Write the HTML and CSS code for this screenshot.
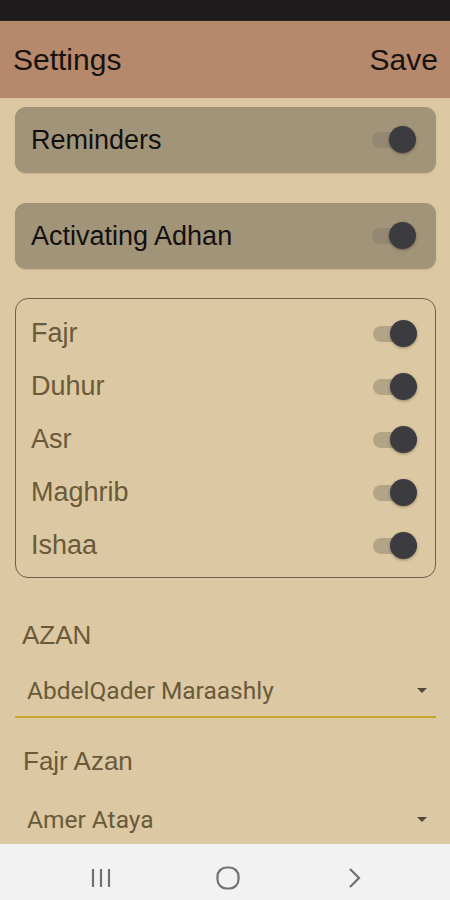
FILE: index.html
```html
<!DOCTYPE html>
<html>
<head>
<meta charset="utf-8">
<link rel="stylesheet" href="styles.css">
</head>
<body>
<div class="screen">
  <div class="statusbar"></div>
  <div class="header">
    <span class="title">Settings</span>
    <span class="save">Save</span>
  </div>
  <div class="content">
    <div class="card">
      <span class="card-label">Reminders</span>
      <span class="toggle dark"><span class="thumb"></span></span>
    </div>
    <div class="card card-2">
      <span class="card-label">Activating Adhan</span>
      <span class="toggle dark"><span class="thumb"></span></span>
    </div>
    <div class="prayers">
      <div class="row"><span class="row-label">Fajr</span><span class="toggle"><span class="thumb"></span></span></div>
      <div class="row"><span class="row-label">Duhur</span><span class="toggle"><span class="thumb"></span></span></div>
      <div class="row"><span class="row-label">Asr</span><span class="toggle"><span class="thumb"></span></span></div>
      <div class="row"><span class="row-label">Maghrib</span><span class="toggle"><span class="thumb"></span></span></div>
      <div class="row"><span class="row-label">Ishaa</span><span class="toggle"><span class="thumb"></span></span></div>
    </div>
    <div class="section-label azan">AZAN</div>
    <div class="picker underline">
      <span class="picker-value">AbdelQader Maraashly</span>
      <span class="caret"></span>
    </div>
    <div class="section-label fajr">Fajr Azan</div>
    <div class="picker picker-2">
      <span class="picker-value">Amer Ataya</span>
      <span class="caret"></span>
    </div>
  </div>
  <div class="navbar">
    <svg class="nav-icon" width="24" height="24" viewBox="0 0 24 24"><path d="M4 3v18M12 3v18M20 3v18" stroke="#707070" stroke-width="2.2" fill="none"/></svg>
    <svg class="nav-icon" width="26" height="26" viewBox="0 0 26 26"><rect x="2.5" y="2.5" width="21" height="21" rx="9" stroke="#707070" stroke-width="2.2" fill="none"/></svg>
    <svg class="nav-icon" width="24" height="24" viewBox="0 0 24 24"><path d="M8 3l9 9-9 9" stroke="#707070" stroke-width="2.2" fill="none"/></svg>
  </div>
</div>
</body>
</html>
```
FILE: styles.css
```css
html, body {
  margin: 0;
  padding: 0;
}
body {
  width: 450px;
  height: 900px;
  overflow: hidden;
  background: #dcc8a2;
  font-family: "Liberation Sans", Arial, sans-serif;
}
.screen {
  display: flex;
  flex-direction: column;
  height: 900px;
}
.statusbar {
  height: 20px;
  background: #1d1b1c;
  border-bottom: 1px solid #2a2624;
}
.header {
  height: 77px;
  background: #b6886c;
  display: flex;
  align-items: center;
  justify-content: space-between;
  padding: 0 12px 0 13px;
  font-size: 30px;
  color: #161210;
}
.content {
  flex: 1;
  padding: 9px 14px 0 15px;
  display: flex;
  flex-direction: column;
  overflow: hidden;
}
.card {
  height: 66px;
  border-radius: 11px;
  background: #a29478;
  display: flex;
  align-items: center;
  justify-content: space-between;
  padding: 0 20px 0 16px;
  box-shadow: 0 1px 2px rgba(80, 60, 30, 0.15);
}
.card-2 {
  margin-top: 30px;
}
.card-label {
  font-size: 27px;
  color: #121010;
}
.toggle {
  position: relative;
  width: 44px;
  height: 16px;
  border-radius: 8px;
  background: #b3a486;
  flex-shrink: 0;
}
.toggle.dark {
  background: #948872;
}
.thumb {
  position: absolute;
  right: 0;
  top: -6px;
  width: 27px;
  height: 27px;
  border-radius: 50%;
  background: #3c3b40;
  box-shadow: 0 1px 3px rgba(0, 0, 0, 0.35);
}
.prayers {
  margin-top: 29px;
  height: 280px;
  box-sizing: border-box;
  border: 1.5px solid #6e604a;
  border-radius: 13px;
  padding: 8px 18px 0 15px;
  display: flex;
  flex-direction: column;
}
.row {
  height: 53px;
  display: flex;
  align-items: center;
  justify-content: space-between;
}
.row-label {
  font-size: 27px;
  color: #6a5a3a;
}
.section-label {
  font-size: 26px;
  color: #6a5a3a;
  padding-left: 7px;
  line-height: 30px;
}
.azan {
  margin-top: 42px;
}
.fajr {
  margin-top: 28px;
  padding-left: 8px;
}
.picker {
  height: 50px;
  display: flex;
  align-items: center;
  justify-content: space-between;
  padding: 0 9px 0 12px;
  font-family: Roboto, "Liberation Sans", sans-serif;
}
.picker.underline {
  margin-top: 18px;
  height: 44px;
  padding-bottom: 4px;
  border-bottom: 2px solid #c9a52c;
}
.picker-2 {
  margin-top: 26px;
  height: 34px;
}
.picker-value {
  font-size: 24.5px;
  color: #6a5a3a;
}
.caret {
  width: 0;
  height: 0;
  border-left: 5px solid transparent;
  border-right: 5px solid transparent;
  border-top: 5px solid #55483a;
}
.navbar {
  height: 56px;
  background: #f2f2f2;
  display: flex;
  align-items: center;
  justify-content: space-between;
  padding: 0 84px 0 89px;
}
.nav-icon {
  display: block;
  margin-top: 12px;
}
```
